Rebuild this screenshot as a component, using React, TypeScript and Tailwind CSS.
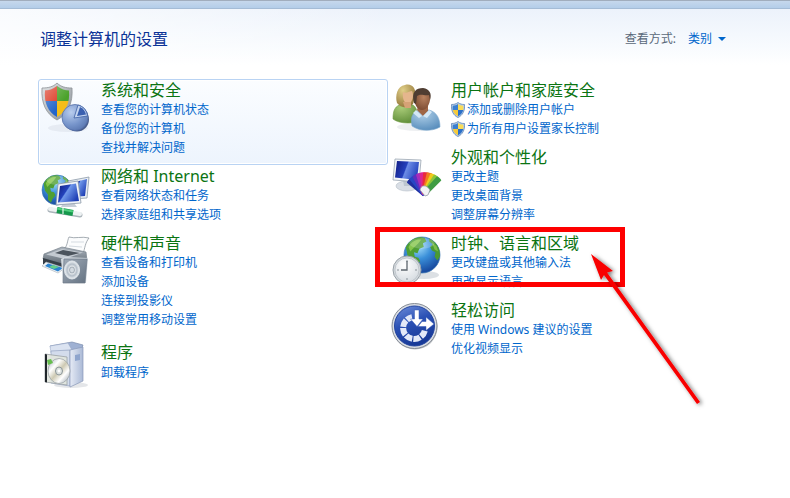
import type { ReactNode } from "react";

const FONT = "font-['Noto_Sans','Noto_Sans_CJK_SC',sans-serif]";

function Icon({ children }: { children: ReactNode }) {
  return (
    <svg viewBox="0 0 50 50" className="mt-[1px] h-[50px] w-[50px] shrink-0 overflow-visible" aria-hidden="true">
      {children}
    </svg>
  );
}

function SecurityIcon() {
  const shield = "M16 1 C20 5 25 6 31 6 C32 21 27 32 16 38 C5 32 0 21 1 6 C7 6 12 5 16 1Z";
  return (
    <Icon>
      <defs>
        <clipPath id="sec-clip">
          <path d="M16 4 C20 7 24 8.500 28 8.500 C29 21 25 30 16 35 C7 30 3 21 4 8.500 C8 8.500 12 7 16 4Z" />
        </clipPath>
        <linearGradient id="sec-rim" x1="0" y1="0" x2="1" y2="1">
          <stop offset="0" stopColor="#e4e6e8" />
          <stop offset="1" stopColor="#858d94" />
        </linearGradient>
        <linearGradient id="sec-gloss" x1="0" y1="0" x2="1" y2="1">
          <stop offset="0" stopColor="#fff" stopOpacity="0.45" />
          <stop offset="0.600" stopColor="#fff" stopOpacity="0" />
        </linearGradient>
        <radialGradient id="sec-pie" cx="0.35" cy="0.3" r="0.8">
          <stop offset="0" stopColor="#b9cdee" />
          <stop offset="0.6" stopColor="#7795cb" />
          <stop offset="1" stopColor="#5673ad" />
        </radialGradient>
      </defs>
      <ellipse cx="27" cy="46" rx="20" ry="4" fill="#8a95a5" opacity="0.12" />
      <path d={shield} fill="url(#sec-rim)" stroke="#8b9196" strokeWidth="0.8" />
      <g clipPath="url(#sec-clip)">
        <path d="M0 0H16V19H0z" fill="#dc3b26" />
        <path d="M16 0H32V19H16z" fill="#4ba22b" />
        <path d="M0 19H16V38H0z" fill="#2465c9" />
        <path d="M16 19H32V38H16z" fill="#f4bd19" />
        <path d="M0 0H32V38H0z" fill="url(#sec-gloss)" />
      </g>
      <ellipse cx="36" cy="37.500" rx="12" ry="12" fill="#4a5e8c" />
      <circle cx="34" cy="35.500" r="13" fill="url(#sec-pie)" stroke="#5570a8" strokeWidth="0.8" />
      <path d="M33 36L37 23A13 13 0 0 1 46.500 34Z" fill="#c4d5f0" stroke="#3e5fa5" strokeWidth="0.8" />
      <path d="M36 34L39 25A11 11 0 0 1 45 32.500Z" fill="#3a60b0" />
    </Icon>
  );
}

function Globe({ id, cx, cy, r }: { id: string; cx: number; cy: number; r: number }) {
  return (
    <g transform={`translate(${cx} ${cy}) scale(${r / 20})`}>
      <defs>
        <radialGradient id={id} cx="0.4" cy="0.25" r="0.8">
          <stop offset="0" stopColor="#a9e2fb" />
          <stop offset="0.45" stopColor="#3a8fd9" />
          <stop offset="1" stopColor="#123f96" />
        </radialGradient>
        <clipPath id={`${id}-clip`}>
          <circle r="20" />
        </clipPath>
      </defs>
      <circle r="20" fill={`url(#${id})`} stroke="#3c78b4" strokeWidth="0.8" />
      <g clipPath={`url(#${id}-clip)`}>
        <path
          d="M-18 -9C-15 -16 -9 -20 -2 -20L3 -19 5 -15 1 -13 2 -9 -3 -7 -5 -2 -9 -3 -8 2 -4 3 -2 7 -6 12 -8 17 -12 13 -12 6 -16 1Z"
          fill="#4f9f33"
        />
        <path d="M8 -19L14 -15 20 -8 20 2 17 6 14 2 15 -3 11 -5 9 -9 12 -12 8 -15Z" fill="#4a9a34" />
        <path d="M-15 -9C-11 -16 -5 -18 -1 -17L-4 -13 -9 -8 -13 -4Z" fill="#92cf52" opacity="0.8" />
        <path d="M11 -14L16 -10 18 -4 14 -6Z" fill="#91ca56" opacity="0.7" />
        <ellipse cx="0" cy="-13" rx="14" ry="6" fill="#fff" opacity="0.2" />
      </g>
    </g>
  );
}

function NetworkIcon() {
  return (
    <Icon>
      <defs>
        <linearGradient id="net-screen" x1="0" y1="0" x2="1" y2="0.6">
          <stop offset="0" stopColor="#101d80" />
          <stop offset="0.45" stopColor="#2443bc" />
          <stop offset="0.5" stopColor="#6f97ea" />
          <stop offset="1" stopColor="#2141b6" />
        </linearGradient>
      </defs>
      <Globe id="net-globe" cx={16} cy={22} r={15} />
      <path d="M27 13L48 9 46 30 30 31Z" fill="#e9eef3" stroke="#8c99a8" strokeWidth="0.8" />
      <path d="M30 15L46 11 44 28 30 29Z" fill="url(#net-screen)" />
      <path d="M22 35L33 35 36 39 20 39Z" fill="#c7ced7" />
      <path d="M17 16L37 13 40 35 15 37Z" fill="#f1f4f8" stroke="#8c99a8" strokeWidth="0.8" />
      <path d="M19 18L35 15.500 38 33 17 34.500Z" fill="url(#net-screen)" />
      <path d="M9 42L39 47" stroke="#aab4ba" strokeWidth="5" strokeLinecap="round" />
      <path d="M9 41L39 46" stroke="#eef2f3" strokeWidth="4" strokeLinecap="round" />
      <path d="M16 42L32 45" stroke="#15984c" strokeWidth="6" />
      <path d="M16 40.500L32 43.500" stroke="#4fcf7d" strokeWidth="2" />
      <path d="M22 40L22 46" stroke="#dff3e6" strokeWidth="1.200" />
    </Icon>
  );
}

function HardwareIcon() {
  return (
    <Icon>
      <defs>
        <linearGradient id="hw-body" x1="0" y1="0" x2="0" y2="1">
          <stop offset="0" stopColor="#aeb7c0" />
          <stop offset="1" stopColor="#59636d" />
        </linearGradient>
        <linearGradient id="hw-box" x1="0" y1="0" x2="1" y2="1">
          <stop offset="0" stopColor="#a1acb8" />
          <stop offset="1" stopColor="#647282" />
        </linearGradient>
        <radialGradient id="hw-cone">
          <stop offset="0" stopColor="#66717c" />
          <stop offset="0.3" stopColor="#f7f9fa" />
          <stop offset="0.65" stopColor="#b4bec8" />
          <stop offset="1" stopColor="#f0f4f7" />
        </radialGradient>
      </defs>
      <path d="M28 2C34 4 41 1 48 3C44 8 44 13 42 19L22 15C27 11 26 6 28 2Z" fill="#fbfcfd" stroke="#8f989f" strokeWidth="0.8" />
      <path d="M30 7L43 7M28 11L41 12" stroke="#d5dbe1" />
      <path d="M3 19L21 12 45 17 46 26 23 31 2 24Z" fill="url(#hw-body)" stroke="#77818b" strokeWidth="0.7" />
      <path d="M5 19.500L21 14 42 17.500 24 24Z" fill="#c3cad1" />
      <path d="M14 18L22 15 39 18 27 21Z" fill="#4b545d" />
      <path d="M2 23L23 29 23 35 2 29Z" fill="#353e47" />
      <path d="M5 27L24 33 17 38 1 31Z" fill="#edf1f4" stroke="#a7b0b8" strokeWidth="0.6" />
      <path d="M7 28.500L22 33 17 36.500 4 31Z" fill="#2b83d0" />
      <path d="M12 30L18 32 13 34 8 32Z" fill="#64cf8b" />
      <path d="M20 24L24 22 47 23 45 48 22 48Z" fill="#d2d9df" />
      <path d="M23 24L46 24 44 48 22 48Z" fill="url(#hw-box)" stroke="#6d7986" strokeWidth="0.7" />
      <ellipse cx="31" cy="35" rx="7.500" ry="9" fill="url(#hw-cone)" stroke="#dfe5ea" strokeWidth="1" />
      <ellipse cx="31" cy="35" rx="2.500" ry="3" fill="#d3dae0" stroke="#7b8793" strokeWidth="0.6" />
    </Icon>
  );
}

function ProgramsIcon() {
  return (
    <Icon>
      <defs>
        <linearGradient id="prog-disc" x1="0" y1="0" x2="1" y2="1">
          <stop offset="0" stopColor="#a3abb4" />
          <stop offset="0.3" stopColor="#ffffff" />
          <stop offset="0.5" stopColor="#cdc9b2" />
          <stop offset="0.7" stopColor="#fff" />
          <stop offset="1" stopColor="#8b969f" />
        </linearGradient>
        <linearGradient id="prog-side" x1="0" y1="0" x2="1" y2="0">
          <stop offset="0" stopColor="#e6ebf5" />
          <stop offset="1" stopColor="#aab9d6" />
        </linearGradient>
      </defs>
      <ellipse cx="30" cy="42" rx="17" ry="3" fill="#7a8492" opacity="0.2" />
      <path d="M9 3L31 -1 42 2 40 8 12 8Z" fill="#9fb1d3" stroke="#7b8cae" strokeWidth="0.7" />
      <path d="M9 3L27 0 31 7 10 10Z" fill="#dbe3f1" stroke="#93a3c2" strokeWidth="0.5" />
      <path d="M10 8L29 7 29 43 10 40Z" fill="#d3dcec" stroke="#94a4c2" strokeWidth="0.7" />
      <path d="M29 7L42 4 42 38 29 44Z" fill="url(#prog-side)" stroke="#8999b9" strokeWidth="0.7" />
      <path d="M34 12L39 11 39 17 34 18Z" fill="#8fa5cd" />
      <path d="M4 11L26 14 26 42 4 39Z" fill="#e1e6de" fillOpacity="0.9" stroke="#9aa1a4" strokeWidth="0.8" />
      <path d="M4 11L6 11.500 6 39.500 4 39Z" fill="#20262b" />
      <ellipse cx="18" cy="28" rx="11" ry="12.500" fill="url(#prog-disc)" stroke="#9da5a8" strokeWidth="0.8" />
      <ellipse cx="18" cy="28" rx="3.500" ry="4" fill="#dce1df" stroke="#8b9598" />
      <circle cx="18" cy="28" r="1.400" fill="#fff" />
      <path d="M6 17L10 16 12 20 7 22Z" fill="#65bd4d" />
    </Icon>
  );
}

function UsersIcon() {
  return (
    <Icon>
      <defs>
        <radialGradient id="us-green" cx="0.35" cy="0.2" r="0.9">
          <stop offset="0" stopColor="#a9cb78" />
          <stop offset="1" stopColor="#5b8a35" />
        </radialGradient>
        <radialGradient id="us-blue" cx="0.4" cy="0.2" r="0.9">
          <stop offset="0" stopColor="#b0d0e8" />
          <stop offset="1" stopColor="#5188b9" />
        </radialGradient>
        <radialGradient id="us-hair" cx="0.35" cy="0.25" r="0.8">
          <stop offset="0" stopColor="#e0cf88" />
          <stop offset="1" stopColor="#94763a" />
        </radialGradient>
        <radialGradient id="us-face" cx="0.6" cy="0.4" r="0.7">
          <stop offset="0" stopColor="#b88260" />
          <stop offset="1" stopColor="#75452d" />
        </radialGradient>
      </defs>
      <ellipse cx="27" cy="45" rx="21" ry="4" fill="#68788a" opacity="0.12" />
      <path d="M2 37C2 28 4 24 11 22L22 23C27 26 27 35 26 40C17 42 7 41 2 37Z" fill="url(#us-green)" stroke="#6f9842" strokeWidth="0.6" />
      <path d="M6 21C4 14 6 4 14 3C21 1 26 7 24 15L22 22C17 27 10 26 6 21Z" fill="url(#us-hair)" />
      <path d="M12 10C15 12 19 9 21 9C23 13 22 19 18 22C14 22 11 18 12 10Z" fill="#e5b68d" />
      <path d="M12 20L14 26 20 26 20 20Z" fill="#d5a276" />
      <path d="M21 44C19 34 22 30 29 28L38 28C46 30 49 37 49 45C40 50 28 49 21 44Z" fill="url(#us-blue)" stroke="#7ca9ce" strokeWidth="0.6" />
      <path d="M27 24L37 24 37 29 32 34 26 28Z" fill="#9f6646" />
      <path d="M25 28L31 34 28 36 22 31ZM38 28L32 34 36 36 41 30Z" fill="#d4e8f6" />
      <path d="M23 17C22 10 26 7 31 7C37 7 40 11 39 18C38 24 35 28 31 28C27 28 24 24 23 17Z" fill="url(#us-face)" />
      <path d="M23 21C20 10 25 6 32 6C39 7 41 12 39 18L38 13C33 14 30 11 26 14L25 22Z" fill="#4f3d32" />
    </Icon>
  );
}

const SWATCHES: [string, number][] = [
  ["#1f2f9f", -50],
  ["#2746c4", -39],
  ["#5a31c0", -28],
  ["#a52cbc", -17],
  ["#dd2590", -7],
  ["#e92c3b", 3],
  ["#f27a22", 13],
  ["#eecb1c", 23],
  ["#8dc63a", 33],
  ["#3f9d43", 42],
];

function AppearanceIcon() {
  return (
    <Icon>
      <defs>
        <linearGradient id="ap-screen" x1="0" y1="0" x2="1" y2="0.3">
          <stop offset="0" stopColor="#111c82" />
          <stop offset="0.5" stopColor="#2440bc" />
          <stop offset="0.55" stopColor="#6c8ce6" />
          <stop offset="1" stopColor="#2c4cc2" />
        </linearGradient>
      </defs>
      <ellipse cx="16" cy="37" rx="11" ry="5" fill="#d9dee5" stroke="#b4bdc7" strokeWidth="0.6" />
      <path d="M12 31L22 32 21 37 13 37Z" fill="#bdc6d0" />
      <path d="M4 10L30 11 28 33 2 31Z" fill="#f2f5f8" stroke="#9ba6b2" strokeWidth="0.8" />
      <path d="M6 12L28 13 26 31 4 28.500Z" fill="url(#ap-screen)" />
      {SWATCHES.map(([color, angle]) => (
        <path key={color} d="M31 45L31 24C32 23 36 23 37 24L36 45Z" fill={color} transform={`rotate(${angle} 34 45)`} />
      ))}
      <path d="M29 41C30 36 35 35 39 41L37 46 34 47Z" fill="#f2f3f5" stroke="#8e949d" strokeWidth="0.7" />
    </Icon>
  );
}

function ClockIcon() {
  return (
    <Icon>
      <defs>
        <radialGradient id="ck-face" cx="0.4" cy="0.3" r="0.8">
          <stop offset="0" stopColor="#ffffff" />
          <stop offset="1" stopColor="#d3d9df" />
        </radialGradient>
      </defs>
      <ellipse cx="33" cy="40" rx="15" ry="4" fill="#506578" opacity="0.2" />
      <Globe id="ck-globe" cx={31} cy={20} r={18} />
      <circle cx="16" cy="35" r="14" fill="#d3d8dc" stroke="#9aa2a9" strokeWidth="1" />
      <circle cx="16" cy="35" r="12" fill="url(#ck-face)" stroke="#b4bcc3" strokeWidth="0.7" />
      <path d="M16 25V27M16 43V45M6 35H8M24 35H26" stroke="#8b949b" strokeWidth="1" />
      <path d="M16 26V35H10" fill="none" stroke="#5d666e" strokeWidth="1.300" />
    </Icon>
  );
}

function EaseIcon() {
  return (
    <Icon>
      <defs>
        <linearGradient id="ez-bg" x1="0" y1="0" x2="0.4" y2="1">
          <stop offset="0" stopColor="#6f8fdb" />
          <stop offset="0.5" stopColor="#2a50b4" />
          <stop offset="1" stopColor="#183a98" />
        </linearGradient>
      </defs>
      <circle cx="24" cy="25" r="22.500" fill="#7e848c" opacity="0.5" />
      <circle cx="23.500" cy="24" r="22.500" fill="#d9dde3" stroke="#858c96" strokeWidth="1" />
      <circle cx="23.500" cy="24" r="20" fill="url(#ez-bg)" stroke="#2546a0" strokeWidth="1" />
      <path
        d="M33.800 28.700A11 11 0 1 1 21 15.200"
        fill="none"
        stroke="#e3e9f8"
        strokeWidth="6"
        strokeDasharray="7 1.200"
      />
      <path d="M23.500 8H28V17H32L26 24.500 19.500 17H23.500Z" fill="#fff" stroke="#3458b4" strokeWidth="0.5" />
      <path d="M27 24.500L31 19.500H35V15L43 22 35 28.500V24.500Z" fill="#fff" stroke="#3458b4" strokeWidth="0.5" />
    </Icon>
  );
}

function UacShield() {
  return (
    <svg viewBox="0 0 14 16" className="h-4 w-[14px] shrink-0" aria-hidden="true">
      <path d="M7 0.500C9 2 11 2.500 13.500 2.500C14 9 11.500 13.500 7 15.500C2.500 13.500 0 9 0.500 2.500C3 2.500 5 2 7 0.500Z" fill="#b5cbe6" stroke="#5f87b8" strokeWidth="0.8" />
      <path d="M7 2V8H1.800C1.500 6.500 1.600 5 1.800 3.700C4 3.600 5.500 3 7 2Z" fill="#3b7fd0" />
      <path d="M7 2V8H12.200C12.500 6.500 12.400 5 12.200 3.700C10 3.600 8.500 3 7 2Z" fill="#f9dc58" />
      <path d="M7 8V14.200C4 12.700 2.300 10.500 1.800 8Z" fill="#f5ca3c" />
      <path d="M7 8V14.200C10 12.700 11.700 10.500 12.200 8Z" fill="#2a6fc8" />
    </svg>
  );
}

type CategoryProps = {
  icon: ReactNode;
  title: string;
  links: string[];
  shielded?: boolean;
  active?: boolean;
  roomy?: boolean;
  children?: ReactNode;
};

function Category({ icon, title, links, shielded, active, roomy, children }: CategoryProps) {
  return (
    <section
      className={`relative flex gap-[10px] rounded-[3px] border pb-[7px] pl-[2px] ${
        active
          ? "border-[#b9d3f3] bg-linear-to-b from-[#fbfdff] to-[#edf4fd] shadow-[inset_0_0_0_1px_#ffffff]"
          : "border-transparent"
      } ${roomy ? "pt-1" : "pt-px"}`}
    >
      {icon}
      <div className="min-w-0">
        <h2 className={`text-base ${roomy ? "leading-[21px]" : "leading-[19px]"}`}>
          <a href="#" className="whitespace-nowrap text-[#0b7412]">
            {title}
          </a>
        </h2>
        <ul className="text-xs leading-[19px]">
          {links.map((link) => (
            <li key={link} className="flex h-[19px] items-center gap-[2px]">
              {shielded && <UacShield />}
              <a href="#" className="whitespace-nowrap text-[#0066cc]">
                {link}
              </a>
            </li>
          ))}
        </ul>
      </div>
      {children}
    </section>
  );
}

function Callout() {
  return (
    <>
      <div className="pointer-events-none absolute -top-[6px] -left-[14px] z-10 h-[60px] w-[250px] border-5 border-[#fe0000]" />
      <svg viewBox="0 0 120 160" className="pointer-events-none absolute top-[17px] left-[197px] z-20 h-[160px] w-[120px]" aria-hidden="true">
        <defs>
          <filter id="arrow-shadow" x="-20%" y="-20%" width="150%" height="150%">
            <feDropShadow dx="2" dy="1" stdDeviation="2" floodColor="#000" floodOpacity="0.55" />
          </filter>
        </defs>
        <g filter="url(#arrow-shadow)" fill="#f80404">
          <path d="M5 4L27 21 21 22.500 114 152 111 154 18 25 15 30Z" />
        </g>
      </svg>
    </>
  );
}

export default function App() {
  return (
    <div className={`min-h-screen overflow-hidden bg-white ${FONT}`}>
      <div className="h-[9px] border-t border-b border-t-[#a1adbd] border-b-[#a5bcd6] bg-linear-to-b from-[#c6d8ec] to-[#b4cde9]" />
      <header className="flex h-[70px] items-center justify-between bg-[linear-gradient(to_right,rgba(255,255,255,0.7),transparent_50%),linear-gradient(to_bottom,#ecf2fb,#f8fbfe_55%,#ffffff_80%)] pr-16 pb-[11px] pl-10">
        <h1 className="text-base leading-5 text-[#0b3397]">调整计算机的设置</h1>
        <div className="flex items-center gap-3 text-xs leading-4">
          <label htmlFor="view-by" className="text-[#596879]">
            查看方式:
          </label>
          <div className="relative flex items-center">
            <select id="view-by" defaultValue="类别" className="w-[38px] appearance-none bg-transparent text-[#0066cc]">
              <option>类别</option>
            </select>
            <svg viewBox="0 0 8 4" className="pointer-events-none absolute right-0 h-1 w-2" aria-hidden="true">
              <path d="M0 0H8L4 4Z" fill="#0066cc" />
            </svg>
          </div>
        </div>
      </header>
      <main className="grid max-w-[738px] grid-cols-2 items-start pl-[38px]">
        <div className="flex flex-col">
          <Category active icon={<SecurityIcon />} title="系统和安全" links={["查看您的计算机状态", "备份您的计算机", "查找并解决问题"]} />
          <Category icon={<NetworkIcon />} title="网络和 Internet" links={["查看网络状态和任务", "选择家庭组和共享选项"]} />
          <Category icon={<HardwareIcon />} title="硬件和声音" links={["查看设备和打印机", "添加设备", "连接到投影仪", "调整常用移动设置"]} />
          <Category roomy icon={<ProgramsIcon />} title="程序" links={["卸载程序"]} />
        </div>
        <div className="flex flex-col">
          <Category shielded icon={<UsersIcon />} title="用户帐户和家庭安全" links={["添加或删除用户帐户", "为所有用户设置家长控制"]} />
          <Category icon={<AppearanceIcon />} title="外观和个性化" links={["更改主题", "更改桌面背景", "调整屏幕分辨率"]} />
          <Category icon={<ClockIcon />} title="时钟、语言和区域" links={["更改键盘或其他输入法", "更改显示语言"]}>
            <Callout />
          </Category>
          <Category icon={<EaseIcon />} title="轻松访问" links={["使用 Windows 建议的设置", "优化视频显示"]} />
        </div>
      </main>
    </div>
  );
}
